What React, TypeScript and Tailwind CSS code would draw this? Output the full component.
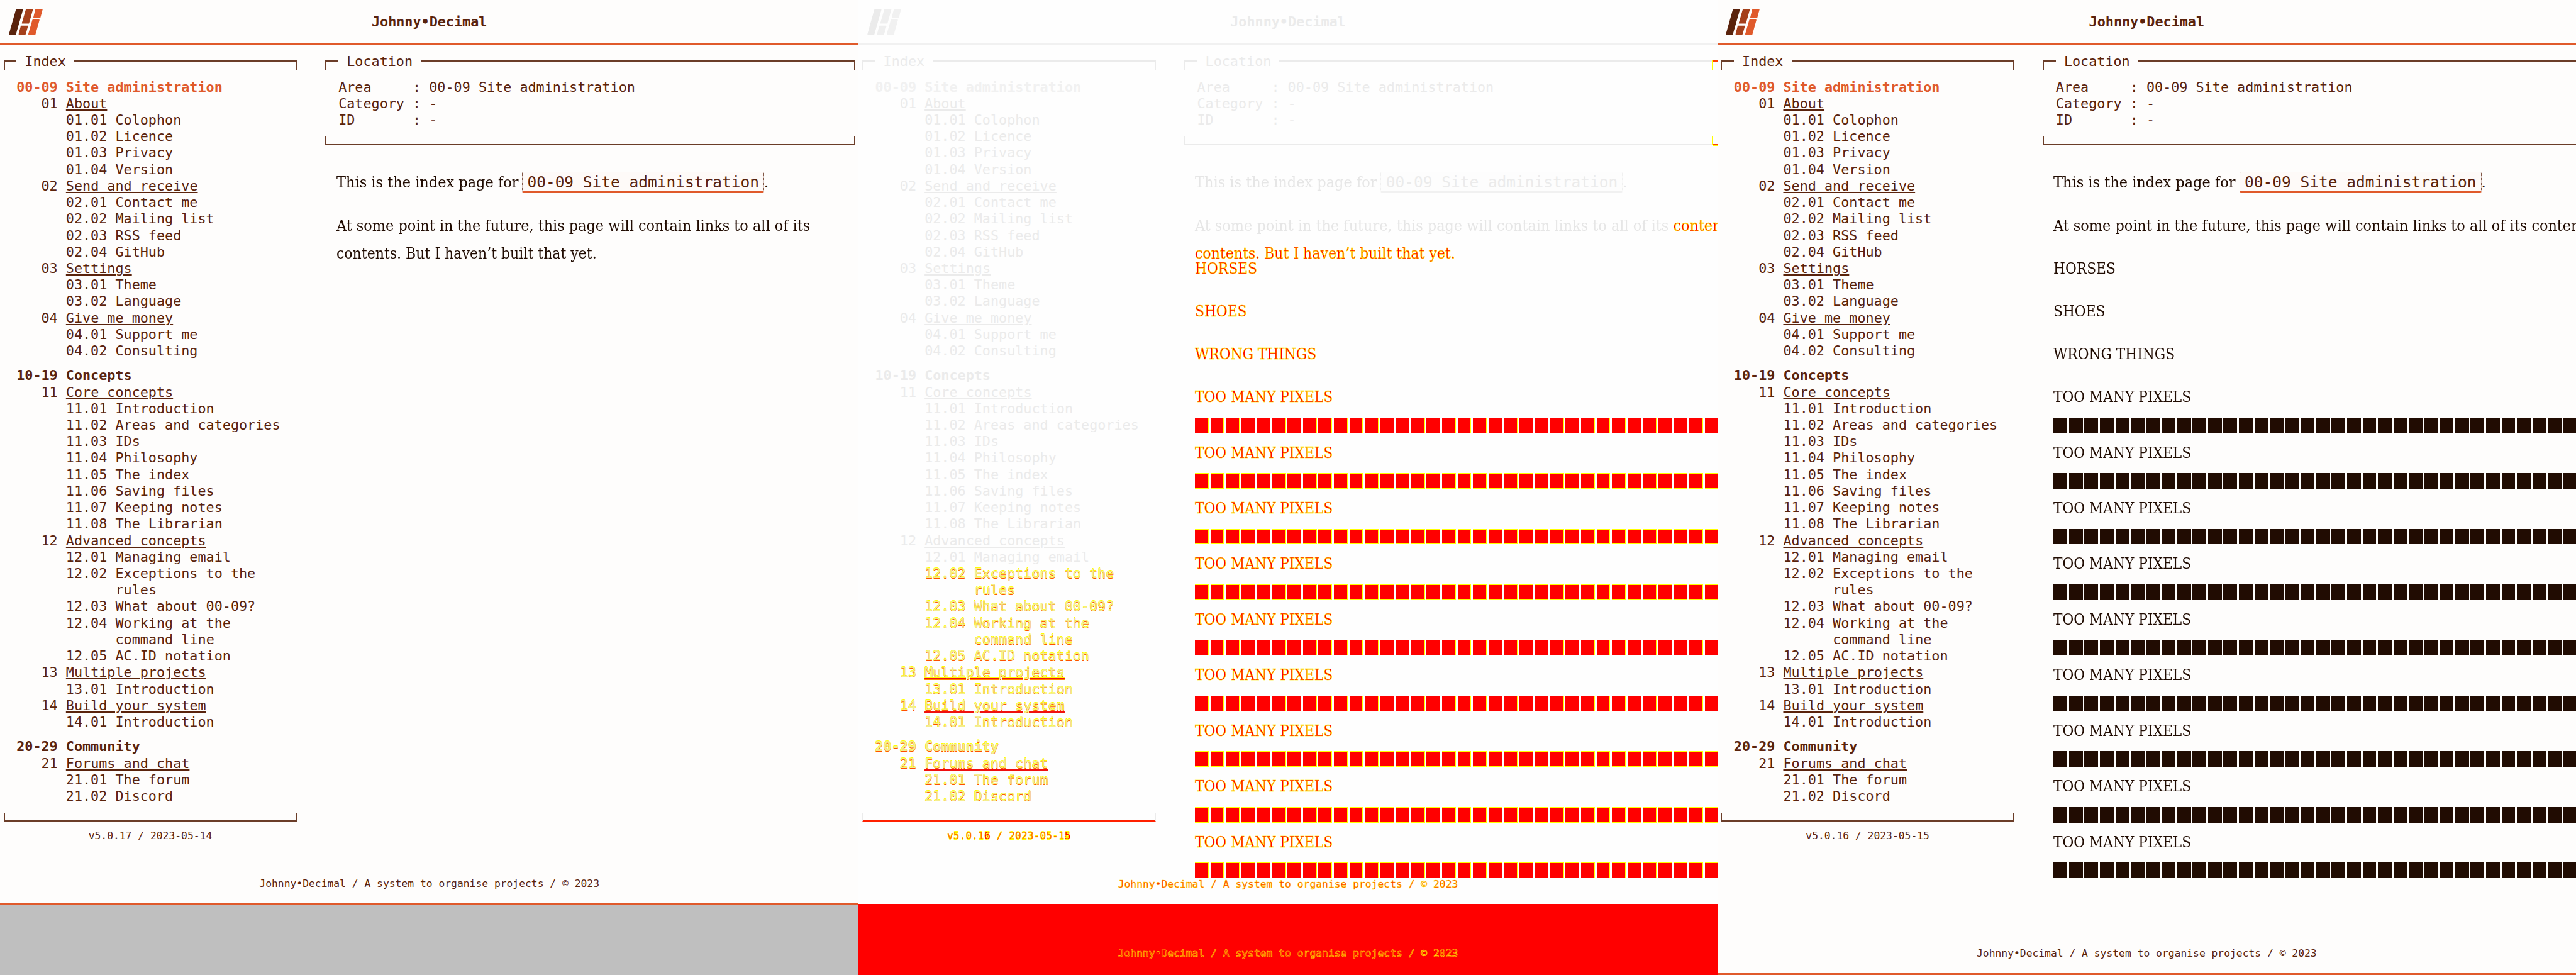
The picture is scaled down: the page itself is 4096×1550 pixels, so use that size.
import React from "react";

type Mode = "page" | "diff";

interface Entry {
  id: string;
  lines: string[];
}
interface Category {
  id: string;
  name: string;
  items: Entry[];
}
interface Area {
  id: string;
  name: string;
  categories: Category[];
}

const e = (id: string, ...lines: string[]): Entry => ({ id, lines });

const AREAS: Area[] = [
  {
    id: "00-09",
    name: "Site administration",
    categories: [
      { id: "01", name: "About", items: [e("01.01", "Colophon"), e("01.02", "Licence"), e("01.03", "Privacy"), e("01.04", "Version")] },
      { id: "02", name: "Send and receive", items: [e("02.01", "Contact me"), e("02.02", "Mailing list"), e("02.03", "RSS feed"), e("02.04", "GitHub")] },
      { id: "03", name: "Settings", items: [e("03.01", "Theme"), e("03.02", "Language")] },
      { id: "04", name: "Give me money", items: [e("04.01", "Support me"), e("04.02", "Consulting")] },
    ],
  },
  {
    id: "10-19",
    name: "Concepts",
    categories: [
      {
        id: "11",
        name: "Core concepts",
        items: [
          e("11.01", "Introduction"),
          e("11.02", "Areas and categories"),
          e("11.03", "IDs"),
          e("11.04", "Philosophy"),
          e("11.05", "The index"),
          e("11.06", "Saving files"),
          e("11.07", "Keeping notes"),
          e("11.08", "The Librarian"),
        ],
      },
      {
        id: "12",
        name: "Advanced concepts",
        items: [
          e("12.01", "Managing email"),
          e("12.02", "Exceptions to the", "rules"),
          e("12.03", "What about 00-09?"),
          e("12.04", "Working at the", "command line"),
          e("12.05", "AC.ID notation"),
        ],
      },
      { id: "13", name: "Multiple projects", items: [e("13.01", "Introduction")] },
      { id: "14", name: "Build your system", items: [e("14.01", "Introduction")] },
    ],
  },
  {
    id: "20-29",
    name: "Community",
    categories: [{ id: "21", name: "Forums and chat", items: [e("21.01", "The forum"), e("21.02", "Discord")] }],
  },
];

const HOT = "text-[#ff0000] [-webkit-text-stroke:0.6px_#ffe800]";
const SHIFTED = "text-[#f4ee90] [text-shadow:0_0.7px_#ff5000,0_-1px_#ffff00,0_1px_#ffff00,-0.5px_0_#ffff00]";

function Logo() {
  return (
    <svg className="h-[41px] w-[54px]" viewBox="20 20 79 60" strokeWidth="2" strokeLinejoin="round">
      <path className="fill-[var(--ink)] stroke-[var(--ink)]" d="M37.8 21H52.3L35.7 79H21.3Z" />
      <path className="fill-[var(--mid)] stroke-[var(--mid)]" d="M60.8 21H75.3L66.2 53.5H51.3ZM48.8 60H63.8L58.3 79H43.7Z" />
      <path className="fill-[var(--accent)] stroke-[var(--accent)]" d="M82.9 21H97.8L92.7 40H78.1ZM75.8 46H90.4L81.2 79H66.2Z" />
    </svg>
  );
}

function FrameTop({ label, open }: { label: string; open?: boolean }) {
  return (
    <div className="flex h-[26.2px] items-end">
      <div className="ml-[5.5px] h-[15px] w-[20.7px] shrink-0 border-l-2 border-t-2 border-[var(--rule)]" />
      <span className="ml-[13.1px]">{label}</span>
      <div
        className={
          open
            ? "ml-[13.1px] h-[15px] flex-1 border-t-2 border-[var(--rule)]"
            : "ml-[13.1px] mr-[5.5px] h-[15px] flex-1 border-r-2 border-t-2 border-[var(--rule)]"
        }
      />
    </div>
  );
}

function IndexRow({ children, className }: { children: React.ReactNode; className?: string }) {
  return <div className={"h-[26.23px] whitespace-pre " + (className ?? "")}>{children}</div>;
}

function Index({ mode }: { mode: Mode }) {
  return (
    <nav className="mt-[14.6px]">
      {AREAS.map((area, i) => {
        const moved = mode === "diff" && i === 2;
        return (
          <div key={area.id} className={i > 0 ? "mt-[13.1px]" : ""}>
            <IndexRow className={"pl-[26.2px] font-bold " + (i === 0 ? "text-[var(--accent)] " : "") + (moved ? SHIFTED : "")}>
              {area.id + " " + area.name}
            </IndexRow>
            {area.categories.map((cat) => {
              const hot = mode === "diff" && cat.id >= "13";
              return (
                <div key={cat.id}>
                  <IndexRow className={"pl-[65.5px] " + (hot ? SHIFTED : "")}>
                    {cat.id}{" "}
                    <span
                      className={
                        "underline decoration-2 underline-offset-[2px] " + (hot ? "decoration-[#f01010]" : "decoration-[var(--ink)]")
                      }
                    >
                      {cat.name}
                    </span>
                  </IndexRow>
                  {cat.items.map((item) =>
                    item.lines.map((line, n) => (
                      <IndexRow
                        key={item.id + n}
                        className={(n ? "pl-[183.5px] " : "pl-[104.8px] ") + (mode === "diff" && item.id >= "12.02" ? SHIFTED : "")}
                      >
                        {n ? line : item.id + " " + line}
                      </IndexRow>
                    )),
                  )}
                </div>
              );
            })}
          </div>
        );
      })}
    </nav>
  );
}

function Version({ mode, version, date }: { mode: Mode; version: string; date: string }) {
  return (
    <div className="mt-[12.8px] flex justify-center text-[16.33px] leading-[19.66px]">
      <span className={"relative whitespace-pre " + (mode === "diff" ? "text-[#ff7000] [text-shadow:0_-1px_#ffff00,0_1px_#ffff00]" : "")}>
        {version + " / " + date}
        {mode === "diff" && <span className="absolute left-0 top-0 text-[#ff0000]">{"      6            5"}</span>}
      </span>
    </div>
  );
}

function Blocks({ mode }: { mode: Mode }) {
  return (
    <div className="flex h-[44.23px] gap-[2.7px] overflow-hidden pt-[10.4px]">
      {Array.from({ length: 34 }, (_, i) => (
        <div
          key={i}
          className={
            mode === "diff"
              ? "h-[24.9px] w-[21.88px] shrink-0 border border-l-0 border-[#ffff00] bg-[#ff0000]"
              : "h-[24.9px] w-[21.88px] shrink-0 bg-[#210c02]"
          }
        />
      ))}
    </div>
  );
}

function Line({ children, className }: { children: React.ReactNode; className: string }) {
  return <span className={"inline-block origin-left whitespace-pre " + className}>{children}</span>;
}

function Article({ mode, long }: { mode: Mode; long: boolean }) {
  const hot = mode === "diff" ? HOT : "";
  return (
    <article className="mt-[37.9px] flex flex-col gap-[23.92px] pl-[22.7px] font-['DejaVu_Serif_Condensed','DejaVu_Serif',serif] text-[23.8px] leading-[44.23px] text-[var(--body)]">
      <div className="flex h-[44.23px]">
        <div className="w-[295.4px] shrink-0">
          <Line className="scale-x-[1.05]">This is the index page for</Line>
        </div>
        <div className="mt-[5px] h-[33.5px] w-[385px] shrink-0 whitespace-pre rounded-[2px] border border-b-[3px] border-dotted border-[var(--ink)] border-b-[var(--accent)] bg-[var(--code)] pl-[7.4px] font-['DejaVu_Sans_Mono',monospace] text-[24.49px] leading-[32px] text-[var(--ink)] [border-bottom-style:solid]">
          00-09 Site administration
        </div>
        <Line className="">.</Line>
      </div>
      <div className="relative whitespace-nowrap">
        <Line className="scale-x-[1.046]">
          At some point in the future, this page will contain links to all of its{" "}
          {long && <span className={hot}>contents. But I haven’t built that yet.</span>}
        </Line>
        {!long && (
          <div>
            <Line className="scale-x-[1.03]">contents. But I haven’t built that yet.</Line>
          </div>
        )}
        {mode === "diff" && (
          <div className="absolute left-0 top-[44.23px]">
            <Line className={"scale-x-[1.03] " + HOT}>contents. But I haven’t built that yet.</Line>
          </div>
        )}
      </div>
      {long && (
        <>
          {["HORSES", "SHOES", "WRONG THINGS"].map((t) => (
            <div key={t} className="h-[44.23px]">
              <Line className={"scale-x-[1.015] " + hot}>{t}</Line>
            </div>
          ))}
          <div>
            {Array.from({ length: 9 }, (_, i) => (
              <div key={i}>
                <div className="h-[44.23px]">
                  <Line className={"scale-x-[1.015] " + hot}>TOO MANY PIXELS</Line>
                </div>
                <Blocks mode={mode} />
              </div>
            ))}
          </div>
        </>
      )}
    </article>
  );
}

function FooterText({ className }: { className?: string }) {
  return (
    <div className={"text-center text-[16.33px] leading-[19.66px] " + (className ?? "")}>
      Johnny•Decimal / A system to organise projects / © 2023
    </div>
  );
}

interface PanelProps {
  mode: Mode;
  long: boolean;
  version: string;
  date: string;
  className: string;
  children?: React.ReactNode;
}

function Panel({ mode, long, version, date, className, children }: PanelProps) {
  const diff = mode === "diff";
  return (
    <section
      className={
        "flex h-[1550px] min-w-0 flex-col overflow-hidden font-['DejaVu_Sans_Mono',monospace] text-[21.77px] leading-[26.2px] text-[var(--ink)] " +
        className
      }
    >
      <header className="relative flex h-[71px] shrink-0 items-center justify-center border-b-[3px] border-[var(--accent)] pt-[3px] font-bold">
        <div className="absolute left-[13.6px] top-[13.6px]">
          <Logo />
        </div>
        Johnny•Decimal
      </header>
      <div className="flex min-h-0 flex-1 justify-between">
        <aside className="w-[477.9px] shrink-0 pt-[13.8px]">
          <FrameTop label="Index" />
          <Index mode={mode} />
          <div
            className={
              "mx-[5.5px] mt-[12.6px] h-[14.3px] border-x-2 border-b-2 border-[var(--rule)] " +
              (diff ? "border-b-[#ff2000] shadow-[0_1px_0_#ffff00,inset_0_-1px_0_#ffff00]" : "")
            }
          />
          <Version mode={mode} version={version} date={date} />
        </aside>
        <main className="w-[853.4px] shrink-0 pt-[13.8px]">
          <FrameTop label="Location" open={long} />
          <dl className="mt-[14.6px] whitespace-pre pl-[26.2px]">
            <IndexRow>{"Area     : 00-09 Site administration"}</IndexRow>
            <IndexRow>{"Category : -"}</IndexRow>
            <IndexRow>{"ID       : -"}</IndexRow>
          </dl>
          <div className="relative mt-[13px]">
            <div className={"ml-[5.5px] h-[13.3px] border-b-2 border-l-2 border-[var(--rule)] " + (long ? "" : "mr-[5.5px] border-r-2")} />
            {diff && (
              <>
                <div className="absolute right-0 top-0 h-[13.3px] w-[7.5px] border-b-2 border-l border-[#ff4000] shadow-[-1px_0_0_#ffff00,0_1px_0_#ffff00]" />
                <div className="absolute -top-[121px] right-0 h-[15px] w-[7.5px] border-l border-t-2 border-[#ff4000] shadow-[-1px_0_0_#ffff00,0_-1px_0_#ffff00]" />
              </>
            )}
          </div>
          <Article mode={mode} long={long} />
        </main>
      </div>
      <FooterText className={"relative shrink-0 pb-[21.4px] " + (diff ? "text-[#ff3000] [-webkit-text-stroke:0.5px_#ffe000]" : "")} />
      {!diff && <div className="h-[3px] shrink-0 bg-[var(--accent)]" />}
      {children}
    </section>
  );
}

const PAGE =
  "bg-[#fefdfc] [--ink:#5a230c] [--mid:#a5401b] [--accent:#e05a2b] [--rule:#6b3d28] [--body:#210c02] [--code:#fefaf8]";
const GHOST =
  "bg-[#fefefe] [--ink:#ebebeb] [--mid:#efefef] [--accent:#f1f1f1] [--rule:#ebebeb] [--body:#e6e6e6] [--code:#fdfdfd]";

export default function App() {
  return (
    <div className="grid h-[1550px] w-[4096px] grid-cols-3 overflow-hidden">
      <Panel mode="page" long={false} version="v5.0.17" date="2023-05-14" className={PAGE}>
        <div className="h-[110.7px] shrink-0 bg-[#bfbfbf]" />
      </Panel>
      <Panel mode="diff" long version="v5.0.17" date="2023-05-14" className={GHOST}>
        <div className="h-[113.4px] shrink-0 bg-[#ff0000] pt-[69px]">
          <FooterText className="text-[#ff0000] [-webkit-text-stroke:0.6px_#ffe800]" />
        </div>
      </Panel>
      <Panel mode="page" long version="v5.0.16" date="2023-05-15" className={PAGE} />
    </div>
  );
}
